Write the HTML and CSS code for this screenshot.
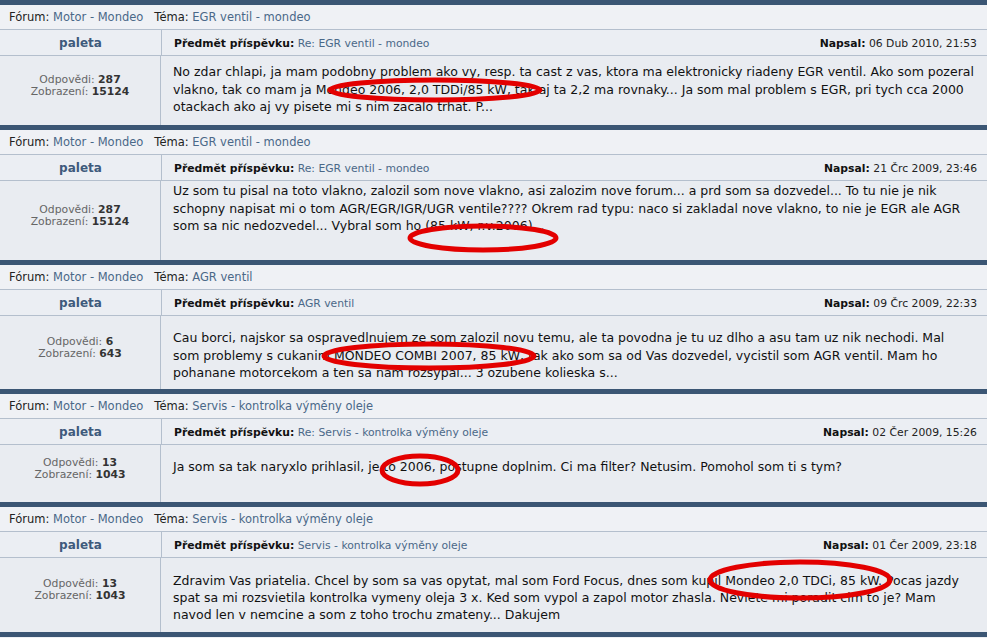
FILE: index.html
```html
<!DOCTYPE html>
<html lang="cs">
<head>
    <meta charset="UTF-8">
    <title>Hledat - Motor - Mondeo</title>
    <link rel="stylesheet" href="styles.css">
</head>
<body>

<div class="page">

    <div class="post h69">
        <div class="bar"></div>
        <div class="where">Fórum: <a href="#">Motor - Mondeo</a> &nbsp; Téma: <a href="#">EGR ventil - mondeo</a></div>
        <div class="head">
            <div class="author">paleta</div>
            <div class="subject">
                <span><b>Předmět příspěvku:</b> <a href="#">Re: EGR ventil - mondeo</a></span>
                <span><b>Napsal:</b> 06 Dub 2010, 21:53</span>
            </div>
        </div>
        <div class="body">
            <div class="stats">
                <div>Odpovědi: <b>287</b></div>
                <div>Zobrazení: <b>15124</b></div>
            </div>
            <div class="msg">No zdar chlapi, ja mam podobny problem ako vy, resp. ta cast z vas, ktora ma elektronicky riadeny EGR ventil. Ako som pozeral<br>vlakno, tak co mam ja Mondeo 2006, 2,0 TDDi/85 kW, tak aj ta 2,2 ma rovnaky... Ja som mal problem s EGR, pri tych cca 2000<br>otackach ako aj vy pisete mi s nim zacalo trhat. P...</div>
        </div>
    </div>

    <div class="post h79">
        <div class="bar"></div>
        <div class="where">Fórum: <a href="#">Motor - Mondeo</a> &nbsp; Téma: <a href="#">EGR ventil - mondeo</a></div>
        <div class="head">
            <div class="author">paleta</div>
            <div class="subject">
                <span><b>Předmět příspěvku:</b> <a href="#">Re: EGR ventil - mondeo</a></span>
                <span><b>Napsal:</b> 21 Črc 2009, 23:46</span>
            </div>
        </div>
        <div class="body">
            <div class="stats">
                <div>Odpovědi: <b>287</b></div>
                <div>Zobrazení: <b>15124</b></div>
            </div>
            <div class="msg">Uz som tu pisal na toto vlakno, zalozil som nove vlakno, asi zalozim nove forum... a prd som sa dozvedel... To tu nie je nik<br>schopny napisat mi o tom AGR/EGR/IGR/UGR ventile???? Okrem rad typu: naco si zakladal nove vlakno, to nie je EGR ale AGR<br>som sa nic nedozvedel... Vybral som ho (85 kW, r.v.2006)...</div>
        </div>
    </div>

    <div class="post h73">
        <div class="bar"></div>
        <div class="where">Fórum: <a href="#">Motor - Mondeo</a> &nbsp; Téma: <a href="#">AGR ventil</a></div>
        <div class="head">
            <div class="author">paleta</div>
            <div class="subject">
                <span><b>Předmět příspěvku:</b> <a href="#">AGR ventil</a></span>
                <span><b>Napsal:</b> 09 Črc 2009, 22:33</span>
            </div>
        </div>
        <div class="body">
            <div class="stats">
                <div>Odpovědi: <b>6</b></div>
                <div>Zobrazení: <b>643</b></div>
            </div>
            <div class="msg">Cau borci, najskor sa ospravedlnujem ze som zalozil novu temu, ale ta povodna je tu uz dlho a asu tam uz nik nechodi. Mal<br>som problemy s cukanim MONDEO COMBI 2007, 85 kW, tak ako som sa od Vas dozvedel, vycistil som AGR ventil. Mam ho<br>pohanane motorcekom a ten sa nam rozsypal... 3 ozubene kolieska s...</div>
        </div>
    </div>

    <div class="post h57">
        <div class="bar"></div>
        <div class="where">Fórum: <a href="#">Motor - Mondeo</a> &nbsp; Téma: <a href="#">Servis - kontrolka výměny oleje</a></div>
        <div class="head">
            <div class="author">paleta</div>
            <div class="subject">
                <span><b>Předmět příspěvku:</b> <a href="#">Re: Servis - kontrolka výměny oleje</a></span>
                <span><b>Napsal:</b> 02 Čer 2009, 15:26</span>
            </div>
        </div>
        <div class="body">
            <div class="stats">
                <div>Odpovědi: <b>13</b></div>
                <div>Zobrazení: <b>1043</b></div>
            </div>
            <div class="msg">Ja som sa tak naryxlo prihlasil, je to 2006, postupne doplnim. Ci ma filter? Netusim. Pomohol som ti s tym?</div>
        </div>
    </div>

    <div class="post h74">
        <div class="bar"></div>
        <div class="where">Fórum: <a href="#">Motor - Mondeo</a> &nbsp; Téma: <a href="#">Servis - kontrolka výměny oleje</a></div>
        <div class="head">
            <div class="author">paleta</div>
            <div class="subject">
                <span><b>Předmět příspěvku:</b> <a href="#">Servis - kontrolka výměny oleje</a></span>
                <span><b>Napsal:</b> 01 Čer 2009, 23:18</span>
            </div>
        </div>
        <div class="body">
            <div class="stats">
                <div>Odpovědi: <b>13</b></div>
                <div>Zobrazení: <b>1043</b></div>
            </div>
            <div class="msg">Zdravim Vas priatelia. Chcel by som sa vas opytat, mal som Ford Focus, dnes som kupil Mondeo 2,0 TDCi, 85 kW. Pocas jazdy<br>spat sa mi rozsvietila kontrolka vymeny oleja 3 x. Ked som vypol a zapol motor zhasla. Neviete mi poradit cim to je? Mam<br>navod len v nemcine a som z toho trochu zmateny... Dakujem</div>
        </div>
    </div>

    <div class="bar"></div>

    <!-- red marks drawn over the screenshot -->
    <svg class="marks" width="987" height="638" viewBox="0 0 987 638">
        <ellipse cx="435" cy="90" rx="105" ry="10"/>
        <ellipse cx="483" cy="238" rx="73" ry="12"/>
        <ellipse cx="429" cy="356" rx="105" ry="12"/>
        <ellipse cx="420" cy="470" rx="38" ry="14"/>
        <ellipse cx="800" cy="580" rx="90" ry="18"/>
    </svg>
</div>

</body>
</html>
```

FILE: styles.css
```css
/* General */
body {
    margin: 0;
    background: #eef0f4;
    font-family: "DejaVu Sans", Verdana, sans-serif;
    color: #222;
}
a {
    color: #4a6888;
    text-decoration: none;
}
.page {
    position: relative;
    width: 987px;
    height: 638px;
    overflow: hidden;
}
.bar {
    height: 5px;
    background: #3b5674;
}

/* Forum / topic line */
.where {
    height: 24px;
    line-height: 25px;
    padding-left: 9px;
    font-size: 11.5px;
    background: #eff1f5;
    border-bottom: 1px solid #b4bfcd;
    white-space: nowrap;
}

/* Author + subject row */
.head {
    display: flex;
    height: 25px;
    background: #ebeef3;
    border-bottom: 1px solid #b4bfcd;
}
.author {
    width: 161px;
    flex: none;
    border-right: 1px solid #b4bfcd;
    text-align: center;
    line-height: 27px;
    font-size: 12px;
    font-weight: bold;
    color: #3e5a7c;
}
.subject {
    flex: 1;
    display: flex;
    justify-content: space-between;
    align-items: center;
    padding: 1px 10px 0 12px;
    font-size: 10.8px;
    white-space: nowrap;
}
.subject b {
    color: #111;
}

/* Post body */
.body {
    display: flex;
    background: #e9ecf1;
}
.h69 .body { height: 69px; }
.h79 .body { height: 79px; }
.h73 .body { height: 73px; }
.h57 .body { height: 57px; }
.h74 .body { height: 74px; }
.stats {
    width: 161px;
    flex: none;
    border-right: 1px solid #b4bfcd;
    display: flex;
    flex-direction: column;
    justify-content: center;
    align-items: center;
    padding-bottom: 10px;
    box-sizing: border-box;
    font-size: 10.8px;
    line-height: 12px;
    color: #666;
}
.stats b {
    color: #333;
}
.msg {
    padding: 7px 0 0 12px;
    font-size: 12.5px;
    line-height: 17.5px;
    white-space: nowrap;
    color: #111;
}
.h79 .msg { padding-top: 1px; }
.h73 .msg { padding-top: 13px; }
.h57 .msg { padding-top: 13px; }
.h74 .msg { padding-top: 14px; line-height: 17px; }

/* Red ellipses */
.marks {
    position: absolute;
    top: 0;
    left: 0;
    pointer-events: none;
}
.marks ellipse {
    fill: none;
    stroke: #e30000;
    stroke-width: 5;
}
```
